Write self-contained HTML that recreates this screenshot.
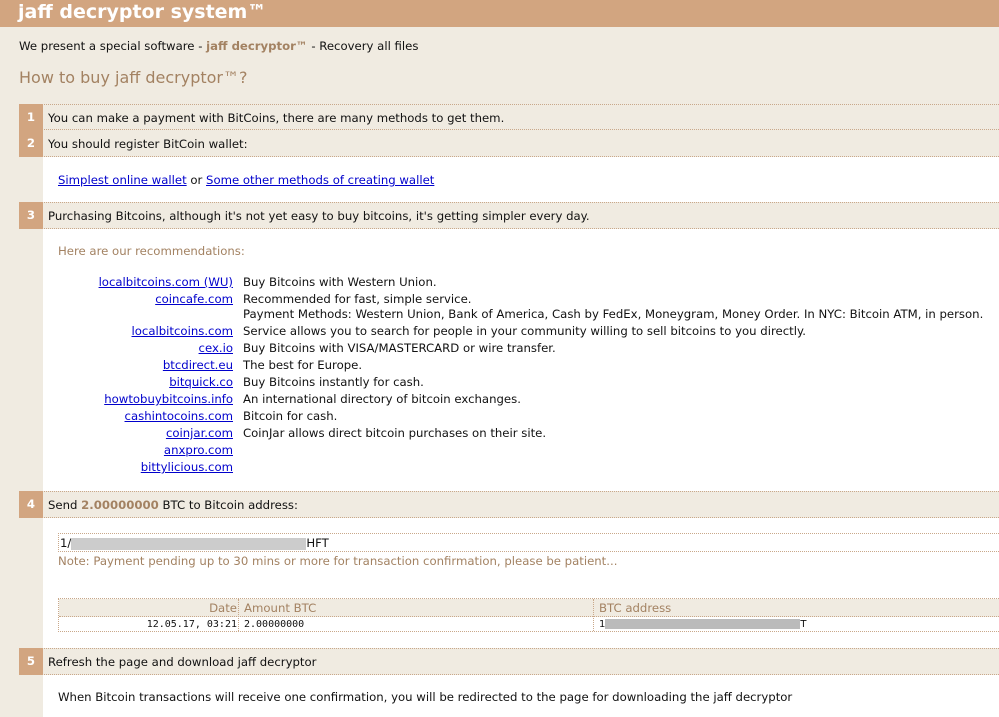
<!DOCTYPE html>
<html><head><meta charset="utf-8"><style>
body{margin:0;width:999px;height:717px;background:#f0ebe1;font-family:"DejaVu Sans","Liberation Sans",sans-serif;font-size:11.7px;color:#111;position:relative;overflow:hidden}
.a{position:absolute;white-space:nowrap;line-height:14px}
.hdr{position:absolute;left:0;top:0;width:999px;height:27px;background:#d2a580;color:#fff;font-size:19px;font-weight:bold;line-height:25px;padding-left:18px;box-sizing:border-box}
.row{position:absolute;left:19px;width:980px;background:#f0ebe1;border-top:1px dotted #c9a88a;border-bottom:1px dotted #c9a88a;box-sizing:border-box}
.num{position:absolute;left:0;top:-1px;bottom:-1px;width:24px;background:#d2a580;color:#fff;font-weight:bold;text-align:center}
.white{position:absolute;left:43px;width:956px;background:#fff}
a{color:#00c;text-decoration:underline}
.br{color:#a38262}
.lk{position:absolute;right:766px;white-space:nowrap;line-height:14px}
</style></head><body>
<div class="hdr">jaff decryptor system™</div>
<div class="a" style="left:19px;top:39px">We present a special software - <b class="br">jaff decryptor™</b> - Recovery all files</div>
<div class="a br" style="left:19px;top:68px;font-size:16px;line-height:20px">How to buy jaff decryptor™?</div>

<div class="white" style="top:156px;height:46px"></div>
<div class="white" style="top:228px;height:264px"></div>
<div class="white" style="top:517px;height:131px"></div>
<div class="white" style="top:674px;height:43px"></div>

<div class="row" style="top:104px;height:26px"><div class="num"><span style="line-height:26px">1</span></div><div class="a" style="left:29px;top:6px">You can make a payment with BitCoins, there are many methods to get them.</div></div>
<div class="row" style="top:129px;height:28px"><div class="num"><span style="line-height:28px">2</span></div><div class="a" style="left:29px;top:7px">You should register BitCoin wallet:</div></div>
<div class="a" style="left:58px;top:173px"><a>Simplest online wallet</a> or <a>Some other methods of creating wallet</a></div>
<div class="row" style="top:202px;height:27px"><div class="num"><span style="line-height:27px">3</span></div><div class="a" style="left:29px;top:6px">Purchasing Bitcoins, although it's not yet easy to buy bitcoins, it's getting simpler every day.</div></div>
<div class="a br" style="left:58px;top:244px">Here are our recommendations:</div>

<div class="lk" style="top:275px"><a>localbitcoins.com (WU)</a></div><div class="a" style="left:243px;top:275px">Buy Bitcoins with Western Union.</div>
<div class="lk" style="top:292px"><a>coincafe.com</a></div><div class="a" style="left:243px;top:292px">Recommended for fast, simple service.</div>
<div class="a" style="left:243px;top:307px">Payment Methods: Western Union, Bank of America, Cash by FedEx, Moneygram, Money Order. In NYC: Bitcoin ATM, in person.</div>
<div class="lk" style="top:324px"><a>localbitcoins.com</a></div><div class="a" style="left:243px;top:324px">Service allows you to search for people in your community willing to sell bitcoins to you directly.</div>
<div class="lk" style="top:341px"><a>cex.io</a></div><div class="a" style="left:243px;top:341px">Buy Bitcoins with VISA/MASTERCARD or wire transfer.</div>
<div class="lk" style="top:358px"><a>btcdirect.eu</a></div><div class="a" style="left:243px;top:358px">The best for Europe.</div>
<div class="lk" style="top:375px"><a>bitquick.co</a></div><div class="a" style="left:243px;top:375px">Buy Bitcoins instantly for cash.</div>
<div class="lk" style="top:392px"><a>howtobuybitcoins.info</a></div><div class="a" style="left:243px;top:392px">An international directory of bitcoin exchanges.</div>
<div class="lk" style="top:409px"><a>cashintocoins.com</a></div><div class="a" style="left:243px;top:409px">Bitcoin for cash.</div>
<div class="lk" style="top:426px"><a>coinjar.com</a></div><div class="a" style="left:243px;top:426px">CoinJar allows direct bitcoin purchases on their site.</div>
<div class="lk" style="top:443px"><a>anxpro.com</a></div>
<div class="lk" style="top:460px"><a>bittylicious.com</a></div>

<div class="row" style="top:491px;height:27px"><div class="num"><span style="line-height:27px">4</span></div><div class="a" style="left:29px;top:6px">Send <b class="br">2.00000000</b> BTC to Bitcoin address:</div></div>
<div style="position:absolute;left:58px;top:533px;width:941px;height:19px;border:1px dotted #c9a88a;border-right:none;box-sizing:border-box"></div>
<div class="a" style="left:60px;top:536px">1/<span style="display:inline-block;width:235px;height:12px;background:#ccc;vertical-align:middle"></span>HFT</div>
<div class="a br" style="left:58px;top:554px">Note: Payment pending up to 30 mins or more for transaction confirmation, please be patient...</div>
<div style="position:absolute;left:58px;top:598px;width:941px;height:34px;border:1px dotted #c9a88a;border-right:none;box-sizing:border-box">
<div style="position:absolute;left:0;top:0;right:0;height:17px;background:#f0ebe1;border-bottom:1px dotted #c9a88a"></div>
<div style="position:absolute;left:179px;top:0;bottom:0;border-left:1px dotted #c9a88a"></div>
<div style="position:absolute;left:534px;top:0;bottom:0;border-left:1px dotted #c9a88a"></div>
<div class="a br" style="right:762px;top:2px">Date</div>
<div class="a br" style="left:185px;top:2px">Amount BTC</div>
<div class="a br" style="left:540px;top:2px">BTC address</div>
<div class="a" style="right:762px;top:19px;font-family:'DejaVu Sans Mono',monospace;font-size:10px">12.05.17, 03:21</div>
<div class="a" style="left:185px;top:19px;font-family:'DejaVu Sans Mono',monospace;font-size:10px">2.00000000</div>
<div class="a" style="left:540px;top:19px;font-size:10px">1<span style="display:inline-block;width:195px;height:10px;background:#bbb;vertical-align:middle"></span>T</div>
</div>

<div class="row" style="top:648px;height:27px"><div class="num"><span style="line-height:27px">5</span></div><div class="a" style="left:29px;top:6px">Refresh the page and download jaff decryptor</div></div>
<div class="a" style="left:58px;top:690px">When Bitcoin transactions will receive one confirmation, you will be redirected to the page for downloading the jaff decryptor</div>
</body></html>
